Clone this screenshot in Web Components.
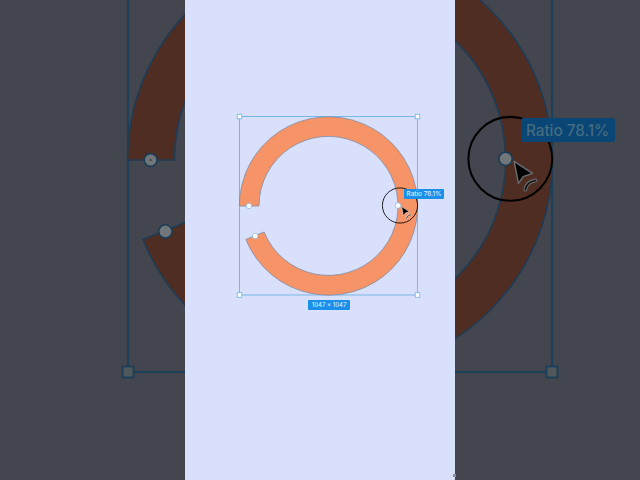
<!DOCTYPE html>
<html>
<head>
<meta charset="utf-8">
<style>
  html, body { margin: 0; height: 100%; background: #42454f; overflow: hidden; }
  body { font-family: "Inter", "Liberation Sans", sans-serif; }
  ring-scene.dim {
    --bg: #43464f;
    --ring: #502d22;
    --ring-line: #1f3c54;
    --line: #1d4058;
    --corner: #50585c;
    --knob: #71767b;
    --knob-line: #1d3d55;
    --dot: #33383f;
    --arrow-line: #6b6d72;
    --tag: #094675;
    --tag-text: #456b80;
  }
  ring-scene.lit {
    --bg: #d9e0fb;
    --ring: #f79467;
    --ring-line: #6e86a8;
    --line: #6fb2e6;
    --corner: #ffffff;
    --knob: #ffffff;
    --knob-line: #7fb4e0;
    --dot: #9aa6b8;
    --arrow-line: #e9dcd2;
    --tag: #1b90ea;
    --tag-text: #d9ecfb;
  }
</style>
</head>
<body>
<template id="scene-tpl">
  <style>
    :host {
      display: block;
      position: relative;
      flex: none;
      height: 100%;
      overflow: hidden;
      background: var(--bg);
    }
    svg { position: absolute; top: 0; display: block; }
    .ring { fill: var(--ring); stroke: var(--ring-line); stroke-width: .7; }
    .box { fill: none; stroke: var(--line); stroke-width: .9; }
    .corner { fill: var(--corner); stroke: var(--line); stroke-width: .8; }
    .knob { fill: var(--knob); stroke: var(--knob-line); stroke-width: .7; }
    .dot { fill: var(--dot); }
    .lens { fill: none; stroke: #000; stroke-width: .85; }
    .arrow { fill: #000; stroke: var(--arrow-line); stroke-width: .6; stroke-linejoin: round; }
    .curl-out { fill: none; stroke: var(--arrow-line); stroke-width: 1.6; stroke-linecap: round; }
    .curl { fill: none; stroke: #111; stroke-width: .7; stroke-linecap: round; }
    .tag {
      position: absolute;
      display: flex;
      align-items: center;
      justify-content: center;
      box-sizing: border-box;
      white-space: nowrap;
      font-weight: 500;
      background: var(--tag);
      color: var(--tag-text);
    }
    .tag:not(.on) { display: none; }
  </style>
  <svg xmlns="http://www.w3.org/2000/svg">
    <g class="art">
      <rect class="box" x="239.5" y="116.5" width="178" height="178.5"/>
      <path class="ring" d="M239.3 206A89.2 89.2 0 1 1 245.8 239.4L264.1 232A69.5 69.5 0 1 0 259 206Z"/>
      <rect class="corner" x="237.2" y="114.2" width="4.6" height="4.6"/>
      <rect class="corner" x="415.2" y="114.2" width="4.6" height="4.6"/>
      <rect class="corner" x="237.2" y="292.7" width="4.6" height="4.6"/>
      <rect class="corner" x="415.2" y="292.7" width="4.6" height="4.6"/>
      <circle class="knob" cx="249" cy="206" r="2.7"/>
      <circle class="dot" cx="249" cy="206" r=".4"/>
      <circle class="knob" cx="255.2" cy="236" r="2.8"/>
      <circle class="lens" cx="400" cy="205.5" r="17.6"/>
      <circle class="knob" cx="398" cy="205.5" r="2.8"/>
      <path class="arrow" d="M401.6 206.6L409.3 211.6L405.4 213L403.4 215.8Z"/>
      <path class="curl-out" d="M406.3 218.4Q406.9 215.2 410.6 214.6"/>
      <path class="curl" d="M406.3 218.4Q406.9 215.2 410.6 214.6"/>
    </g>
  </svg>
  <div class="tag ratio"><slot name="ratio"></slot></div>
  <div class="tag size"><slot name="size"></slot></div>
</template>

<template id="frame-tpl">
  <style>
    :host { display: flex; width: 640px; height: 480px; position: relative; overflow: hidden; }
    .speck {
      position: absolute;
      left: 453px;
      top: 474px;
      width: 3px;
      height: 3px;
      background: #8b8fa6;
    }
  </style>
  <slot></slot>
  <div class="speck"></div>
</template>

<video-frame>
  <ring-scene class="dim" zoom="2.382" focus-x="340" focus-y="160" left="0" width="185"></ring-scene>
  <ring-scene class="lit" zoom="1" focus-x="328.5" focus-y="206" left="185" width="270">
    <span slot="ratio">Ratio 78.1%</span>
    <span slot="size">1047 × 1047</span>
  </ring-scene>
  <ring-scene class="dim" zoom="2.382" focus-x="340" focus-y="160" left="455" width="185">
    <span slot="ratio">Ratio 78.1%</span>
  </ring-scene>
</video-frame>

<script>
  // scene coords are the middle panel's screen pixels, sides are the same art zoomed in
  const CX = 328.5, CY = 206;

  class RingScene extends HTMLElement {
    constructor() {
      super();
      this.attachShadow({ mode: 'open' });
      this.shadowRoot.appendChild(document.getElementById('scene-tpl').content.cloneNode(true));
    }

    connectedCallback() {
      const zoom = parseFloat(this.getAttribute('zoom') || '1');
      const focusX = parseFloat(this.getAttribute('focus-x') || CX);
      const focusY = parseFloat(this.getAttribute('focus-y') || CY);
      const left = parseFloat(this.getAttribute('left') || '0');
      const width = parseFloat(this.getAttribute('width') || '270');
      this.style.width = width + 'px';

      const toX = (x) => focusX + (x - CX) * zoom - left;
      const toY = (y) => focusY + (y - CY) * zoom;

      const svg = this.shadowRoot.querySelector('svg');
      svg.setAttribute('width', width);
      svg.setAttribute('height', 480);
      this.shadowRoot.querySelector('.art').setAttribute(
        'transform',
        `translate(${toX(0)} ${toY(0)}) scale(${zoom})`
      );

      this.placeTag('.ratio', 'ratio', 404.3, 188.5, 39.5, 10, 6.4, toX, toY, zoom);
      this.placeTag('.size', 'size', 308.2, 299.8, 41.8, 9.8, 6, toX, toY, zoom);
    }

    placeTag(sel, slotName, x, y, w, h, font, toX, toY, zoom) {
      const tag = this.shadowRoot.querySelector(sel);
      if (!this.querySelector(`[slot="${slotName}"]`)) return;
      tag.classList.add('on');
      tag.style.left = toX(x) + 'px';
      tag.style.top = toY(y) + 'px';
      tag.style.width = w * zoom + 'px';
      tag.style.height = h * zoom + 'px';
      tag.style.fontSize = font * zoom + 'px';
      tag.style.borderRadius = 1 * zoom + 'px';
    }
  }

  class VideoFrame extends HTMLElement {
    constructor() {
      super();
      this.attachShadow({ mode: 'open' });
      this.shadowRoot.appendChild(document.getElementById('frame-tpl').content.cloneNode(true));
    }
  }

  customElements.define('ring-scene', RingScene);
  customElements.define('video-frame', VideoFrame);
</script>
</body>
</html>
